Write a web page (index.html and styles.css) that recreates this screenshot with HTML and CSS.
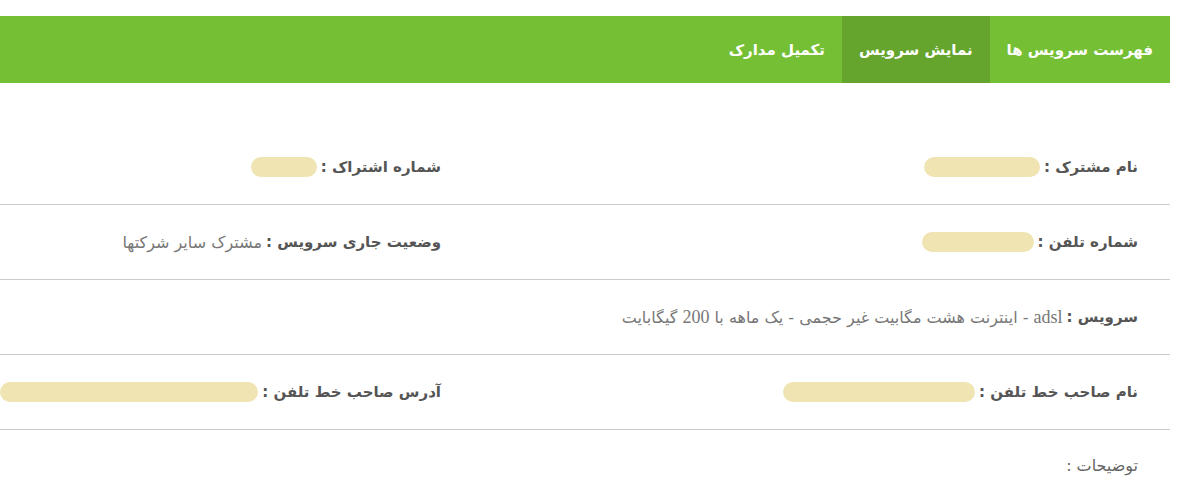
FILE: index.html
```html
<!DOCTYPE html>
<html lang="fa" dir="rtl">

<head>
  <meta charset="UTF-8">
  <meta name="viewport" content="width=device-width">
  <title>نمایش سرویس</title>
  <link rel="stylesheet" href="styles.css">
</head>

<body>

  <nav class="tabs">
    <a class="tab" href="#">فهرست سرویس ها</a>
    <a class="tab active" href="#">نمایش سرویس</a>
    <a class="tab" href="#">تکمیل مدارک</a>
  </nav>

  <div class="details">

    <div class="row">
      <div class="cell main">
        <span class="label">نام مشترک :</span>
        <span class="hidden-value" style="width: 116px"></span>
      </div>
      <div class="cell side">
        <span class="label">شماره اشتراک :</span>
        <span class="hidden-value" style="width: 66px"></span>
      </div>
    </div>

    <div class="row">
      <div class="cell main">
        <span class="label">شماره تلفن :</span>
        <span class="hidden-value" style="width: 112px"></span>
      </div>
      <div class="cell side">
        <span class="label">وضعیت جاری سرویس :</span><span class="value">مشترک سایر شرکتها</span>
      </div>
    </div>

    <div class="row">
      <div class="cell main">
        <span class="label">سرویس :</span>
        <span class="value"><span class="latin">adsl</span> - اینترنت هشت مگابیت غیر حجمی - یک ماهه با <span class="latin">200</span> گیگابایت</span>
      </div>
    </div>

    <div class="row">
      <div class="cell main">
        <span class="label">نام صاحب خط تلفن :</span>
        <span class="hidden-value" style="width: 192px"></span>
      </div>
      <div class="cell side">
        <span class="label">آدرس صاحب خط تلفن :</span>
        <span class="hidden-value" style="width: 270px"></span>
      </div>
    </div>

    <div class="row last">
      <div class="cell main">
        <span class="note">توضیحات :</span>
      </div>
    </div>

  </div>

</body>

</html>
```

FILE: styles.css
```css
* {
  box-sizing: border-box;
  margin: 0;
  padding: 0;
}

body {
  font-family: "DejaVu Sans", "Noto Sans", sans-serif;
  background-color: #ffffff;
  color: #666;
  width: 1170px;
  margin-right: 10px;
  padding-top: 16px;
}

.tabs {
  display: flex;
  height: 67px;
  background-color: #75bf35;
}

.tab {
  display: flex;
  align-items: center;
  padding: 0 17px;
  color: #ffffff;
  font-size: 15px;
  font-weight: bold;
  text-decoration: none;
}

.tab.active {
  background-color: #65a52e;
}

.details {
  margin-top: 47px;
}

.row {
  display: flex;
  height: 75px;
  align-items: center;
  border-bottom: 1px solid #cccccc;
}

.row.last {
  border-bottom: none;
  height: 70px;
}

.cell {
  display: flex;
  align-items: center;
  padding-right: 32px;
  font-size: 15px;
}

.main {
  flex: 1;
}

.side {
  width: 473px;
}

.label {
  font-weight: bold;
  color: #555;
  white-space: nowrap;
}

.value {
  color: #777;
  font-size: 16px;
  margin-right: 4px;
  white-space: nowrap;
}

.latin {
  font-family: "Liberation Serif", serif;
  font-size: 18px;
}

.note {
  color: #666;
  font-size: 16px;
}

.hidden-value {
  display: inline-block;
  height: 20px;
  margin-right: 4px;
  border-radius: 10px;
  background-color: #f0e4b3;
}
```
